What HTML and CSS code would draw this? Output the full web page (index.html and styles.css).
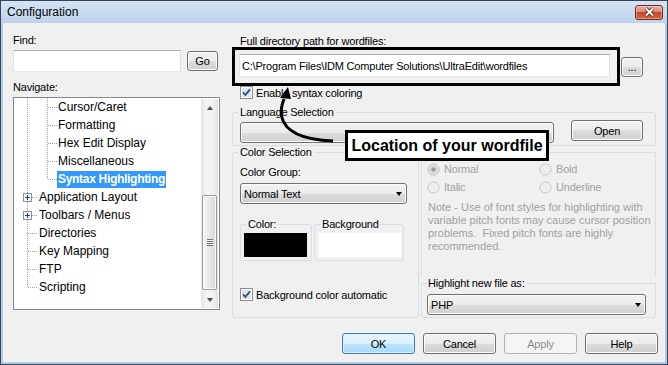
FILE: index.html
```html
<!DOCTYPE html>
<html lang="en">
<head>
<meta charset="utf-8">
<title>Configuration</title>
<link rel="stylesheet" href="styles.css">
</head>
<body>
<div class="window">
  <div class="titlebar">
    <span class="title">Configuration</span>
    <button class="close" aria-label="Close">
      <svg width="11" height="10" viewBox="0 0 11 10" aria-hidden="true">
        <path d="M2 1.5 L9 8.5 M9 1.5 L2 8.5" stroke="#4b1a10" stroke-width="3.6" fill="none"/>
        <path d="M2 1.5 L9 8.5 M9 1.5 L2 8.5" stroke="#fff" stroke-width="2" fill="none"/>
      </svg>
    </button>
  </div>

  <div class="client">
    <div class="left">
      <div class="lbl">Find:</div>
      <div class="find-row">
        <input class="text find" type="text" aria-label="Find">
        <button class="btn go">Go</button>
      </div>
      <div class="lbl nav-lbl">Navigate:</div>
      <div class="tree">
        <ul class="tree-items">
          <li class="node child"><span class="h"></span><span class="label">Cursor/Caret</span></li>
          <li class="node child"><span class="h"></span><span class="label">Formatting</span></li>
          <li class="node child"><span class="h"></span><span class="label">Hex Edit Display</span></li>
          <li class="node child"><span class="h"></span><span class="label">Miscellaneous</span></li>
          <li class="node child"><span class="h"></span><span class="label sel">Syntax Highlighting</span></li>
          <li class="node top"><svg class="exp" width="9" height="9" viewBox="0 0 9 9" aria-hidden="true"><rect x=".5" y=".5" width="8" height="8" fill="#f6f6f6" stroke="#919191"/><path d="M2 4.5h5M4.5 2v5" stroke="#1c4a8c"/></svg><span class="h"></span><span class="label">Application Layout</span></li>
          <li class="node top"><svg class="exp" width="9" height="9" viewBox="0 0 9 9" aria-hidden="true"><rect x=".5" y=".5" width="8" height="8" fill="#f6f6f6" stroke="#919191"/><path d="M2 4.5h5M4.5 2v5" stroke="#1c4a8c"/></svg><span class="h"></span><span class="label">Toolbars / Menus</span></li>
          <li class="node leaf"><span class="h"></span><span class="label">Directories</span></li>
          <li class="node leaf"><span class="h"></span><span class="label">Key Mapping</span></li>
          <li class="node leaf"><span class="h"></span><span class="label">FTP</span></li>
          <li class="node leaf"><span class="h"></span><span class="label">Scripting</span></li>
        </ul>
        <div class="scrollbar">
          <div class="sb-btn"><span class="tri-up"></span></div>
          <div class="sb-track">
            <div class="sb-thumb"><span class="grip"></span></div>
          </div>
          <div class="sb-btn"><span class="tri-down"></span></div>
        </div>
      </div>
    </div>

    <div class="right">
      <div class="lbl path-lbl">Full directory path for wordfiles:</div>
      <div class="path-row">
        <div class="frame">
          <input class="text path" type="text" value="C:\Program Files\IDM Computer Solutions\UltraEdit\wordfiles" aria-label="Full directory path for wordfiles">
        </div>
        <button class="btn browse">...</button>
      </div>
      <div class="check-row top-check">
        <svg width="13" height="13" viewBox="0 0 13 13" aria-hidden="true"><rect x=".5" y=".5" width="12" height="12" fill="#fff" stroke="#8e8f8f"/><rect x="2" y="2" width="9" height="9" fill="#dde3ea"/><path d="M3 6.3l2.4 2.6L10 3.4" fill="none" stroke="#34508a" stroke-width="1.8"/></svg>
        <span>Enable syntax coloring</span>
      </div>

      <fieldset class="group lang">
        <legend>Language Selection</legend>
        <div class="lang-row">
          <div class="combo lang-combo"></div>
          <button class="btn open">Open</button>
        </div>
      </fieldset>

      <div class="color-row">
        <fieldset class="group colorsel">
          <legend>Color Selection</legend>
          <div class="lbl cg-lbl">Color Group:</div>
          <div class="combo group-combo"><span>Normal Text</span><span class="caret"></span></div>
          <div class="swatches">
            <fieldset class="mini mcolor"><legend>Color:</legend><div class="swatch black"></div></fieldset>
            <fieldset class="mini mbg"><legend>Background</legend><div class="swatch white"></div></fieldset>
          </div>
          <div class="check-row bgauto">
            <svg width="13" height="13" viewBox="0 0 13 13" aria-hidden="true"><rect x=".5" y=".5" width="12" height="12" fill="#fff" stroke="#8e8f8f"/><rect x="2" y="2" width="9" height="9" fill="#dde3ea"/><path d="M3 6.3l2.4 2.6L10 3.4" fill="none" stroke="#34508a" stroke-width="1.8"/></svg>
            <span>Background color automatic</span>
          </div>
        </fieldset>

        <div class="style-col">
          <fieldset class="group fontstyle">
            <div class="radios">
              <div class="radio"><svg width="13" height="13" viewBox="0 0 13 13" aria-hidden="true"><circle cx="6.5" cy="6.5" r="5.5" fill="#f2f2f2" stroke="#b4b4b4"/><circle cx="6.5" cy="6.5" r="3.6" fill="#e6e6e6" stroke="#cdcdcd"/><circle cx="6.5" cy="6.5" r="2.3" fill="#9c9c9c"/></svg><span>Normal</span></div>
              <div class="radio"><svg width="13" height="13" viewBox="0 0 13 13" aria-hidden="true"><circle cx="6.5" cy="6.5" r="5.5" fill="#f4f4f4" stroke="#c2c2c2"/><circle cx="6.5" cy="6.5" r="3.8" fill="#ececec"/></svg><span>Bold</span></div>
              <div class="radio"><svg width="13" height="13" viewBox="0 0 13 13" aria-hidden="true"><circle cx="6.5" cy="6.5" r="5.5" fill="#f4f4f4" stroke="#c2c2c2"/><circle cx="6.5" cy="6.5" r="3.8" fill="#ececec"/></svg><span>Italic</span></div>
              <div class="radio"><svg width="13" height="13" viewBox="0 0 13 13" aria-hidden="true"><circle cx="6.5" cy="6.5" r="5.5" fill="#f4f4f4" stroke="#c2c2c2"/><circle cx="6.5" cy="6.5" r="3.8" fill="#ececec"/></svg><span>Underline</span></div>
            </div>
            <p class="note">Note - Use of font styles for highlighting with<br>variable pitch fonts may cause cursor position<br>problems.&nbsp; Fixed pitch fonts are highly<br>recommended.</p>
          </fieldset>
          <fieldset class="group hl">
            <legend>Highlight new file as:</legend>
            <div class="combo php"><span>PHP</span><span class="caret"></span></div>
          </fieldset>
        </div>
      </div>

      <div class="buttons">
        <button class="btn default">OK</button>
        <button class="btn">Cancel</button>
        <button class="btn" disabled>Apply</button>
        <button class="btn">Help</button>
      </div>
    </div>
  </div>

  <svg class="arrow" width="70" height="70" viewBox="270 80 70 70" aria-hidden="true">
    <path d="M333 141 C305 140 285 133 281.5 116 C280.5 109 282 104 284 99" fill="none" stroke="#000" stroke-width="3"/>
    <path d="M288 87 L280 98 L291 99 Z" fill="#000"/>
  </svg>
  <div class="callout">Location of your wordfile</div>
</div>
</body>
</html>
```

FILE: styles.css
```css
* { box-sizing: border-box; }
html, body { margin: 0; padding: 0; }
body {
  width: 668px;
  height: 365px;
  overflow: hidden;
  background: #fff;
  font-family: "Liberation Sans", Arial, sans-serif;
  font-size: 11px;
  letter-spacing: -0.2px;
  color: #000;
}

.window {
  position: relative;
  width: 668px;
  height: 365px;
  border: 1px solid #34465c;
  background: #b3cde8;
  display: flex;
  flex-direction: column;
}

.titlebar {
  height: 22px;
  flex: none;
  display: flex;
  align-items: center;
  justify-content: space-between;
  padding: 0 4px 0 6px;
  background: linear-gradient(#d6e3f2, #bcd3ec);
}
.title { font-size: 12px; letter-spacing: 0; }
.close {
  width: 28px;
  height: 15px;
  padding: 0;
  border: 1px solid #6d2a1f;
  border-radius: 3px;
  background: linear-gradient(#eab0a2 0%, #dd8a76 45%, #c7452b 50%, #d8663f 100%);
  box-shadow: inset 0 0 0 1px rgba(255,255,255,.35);
  display: flex;
  align-items: center;
  justify-content: center;
}

.client {
  flex: 1;
  margin: 0 2px 2px 2px;
  background: #f0f0f0;
  display: flex;
  gap: 12px;
  padding: 11px 0 0 10px;
}
.left { width: 207px; display: flex; flex-direction: column; }
.right { width: 426px; display: flex; flex-direction: column; padding-top: 1px; }

.lbl { line-height: 13px; }

.text {
  font: inherit;
  letter-spacing: inherit;
  color: #000;
  margin: 0;
  padding: 0 2px;
  background: #fff;
  border: 1px solid;
  border-color: #abadb3 #dbdfe6 #e3e9ef #e2e3ea;
  outline: none;
}

.btn, .combo {
  font: inherit;
  letter-spacing: inherit;
  color: #000;
  height: 21px;
  padding: 0;
  margin: 0;
  border: 1px solid #707070;
  border-radius: 3px;
  background: linear-gradient(#f2f2f2 0%, #ebebeb 50%, #dddddd 50%, #cfcfcf 100%);
  box-shadow: inset 0 0 0 1px #fbfbfb;
}
.btn.default {
  border-color: #3c7fb1;
  background: linear-gradient(#eaf6fd 0%, #d9f0fc 50%, #bee6fd 50%, #a7d9f5 100%);
  box-shadow: inset 0 0 0 1px #d8f0fb;
}
.btn:disabled {
  border-color: #adb2b5;
  background: #f4f4f4;
  box-shadow: none;
  color: #8a8a8a;
}

/* left column */
.find-row { display: flex; align-items: center; gap: 6px; margin-top: 3px; }
.find { width: 168px; height: 22px; }
.go { width: 31px; height: 20px; }
.nav-lbl { margin-top: 9px; }

.tree {
  margin-top: 3px;
  width: 207px;
  height: 213px;
  border: 1px solid #828790;
  background: #fff;
  display: flex;
}
.tree-items {
  flex: 1;
  list-style: none;
  margin: 0;
  padding: 0;
  font-size: 12px;
  letter-spacing: 0;
  background:
    repeating-linear-gradient(to bottom, #a0a0a0 0 1px, transparent 1px 2px) 13px 0 / 1px 190px no-repeat,
    repeating-linear-gradient(to bottom, #a0a0a0 0 1px, transparent 1px 2px) 33px 0 / 1px 82px no-repeat;
}
.node { height: 18px; display: flex; align-items: center; }
.node.child { padding-left: 34px; }
.node.top { padding-left: 9px; }
.node.leaf { padding-left: 14px; }
.h {
  flex: none;
  width: 9px;
  height: 1px;
  align-self: flex-start;
  margin-top: 9px;
  background: repeating-linear-gradient(to right, #a0a0a0 0 1px, transparent 1px 2px);
}
.node.top .h { width: 6px; }
.node.leaf .h { width: 10px; }
.exp { flex: none; display: block; align-self: flex-start; margin-top: 5px; }
.label { padding: 0 1px; line-height: 17px; white-space: nowrap; }
.label.sel { background: #3399ff; color: #fff; font-weight: bold; letter-spacing: -0.3px; }

.scrollbar {
  width: 17px;
  flex: none;
  margin: 1px 1px 1px 0;
  display: flex;
  flex-direction: column;
  background: linear-gradient(to right, #e4e4e4, #f5f5f5 35%, #f1f1f1 70%, #e2e2e2);
}
.sb-btn { height: 17px; flex: none; display: flex; align-items: center; justify-content: center; }
.tri-up { width: 0; height: 0; border-left: 3.5px solid transparent; border-right: 3.5px solid transparent; border-bottom: 4px solid #4a4a4a; }
.tri-down { width: 0; height: 0; border-left: 3.5px solid transparent; border-right: 3.5px solid transparent; border-top: 4px solid #4a4a4a; }
.sb-track { flex: 1; padding-top: 79px; }
.sb-thumb {
  height: 95px;
  margin: 0 1px;
  border: 1px solid #9b9b9b;
  border-radius: 2px;
  background: linear-gradient(to right, #f4f4f4, #e7e7e7 50%, #d6d6d6);
  box-shadow: inset 0 0 0 1px #fafafa;
  display: flex;
  align-items: center;
  justify-content: center;
}
.grip { width: 6px; height: 7px; background: repeating-linear-gradient(to bottom, #6e6e6e 0 1px, #fafafa 1px 2px); }

/* right column */
.path-lbl { padding-left: 8px; line-height: 12px; }
.path-row { display: flex; align-items: center; }
.frame { border: 3px solid #000; padding: 4px 7px 6px 4px; }
.path { width: 371px; height: 23px; }
.browse { width: 22px; height: 20px; margin-left: 1px; }
.check-row { display: flex; align-items: center; gap: 3px; height: 13px; }
.check-row svg { flex: none; display: block; }
.top-check { padding-left: 8px; }

.group {
  margin: 0;
  min-width: 0;
  border: 1px solid #d5dfe5;
  border-radius: 3px;
}
.group > legend { padding: 0 2px; margin-left: -2px; line-height: 13px; }

.lang { margin: 7px 2px 0 0; padding: 1px 12px 2px 7px; }
.lang-row { display: flex; align-items: flex-start; }
.lang-combo { width: 314px; margin-top: 2px; }
.open { width: 72px; margin-left: 17px; }

.color-row { display: flex; }
.colorsel { width: 187px; padding: 0 7px 16px 7px; }
.cg-lbl { margin-top: 7px; }
.combo { display: flex; align-items: center; justify-content: space-between; padding: 0 4px 0 3px; }
.group-combo { width: 167px; margin-top: 4px; }
.caret { width: 0; height: 0; border-left: 3.5px solid transparent; border-right: 3.5px solid transparent; border-top: 4px solid #000; }

.swatches { display: flex; gap: 2px; margin-top: 14px; }
.mini { margin: 0; min-width: 0; border: 1px solid #d5dfe5; border-radius: 3px; }
.mini > legend { padding: 0 1px; line-height: 13px; }
.mcolor { width: 72px; padding: 2px 4px 3px 3px; }
.mcolor > legend { margin-left: 3px; }
.mbg { width: 90px; padding: 2px 2px 3px 4px; }
.mbg > legend { margin-left: 2px; }
.swatch { height: 24px; }
.swatch.black { width: 63px; background: #000; }
.swatch.white { width: 82px; background: #fff; }
.bgauto { margin-top: 27px; }

.style-col { width: 235px; margin-left: 2px; display: flex; flex-direction: column; }
.fontstyle {
  flex: 1;
  margin: 6px 0 0 0;
  padding: 7px 5px 0 5px;
  border-bottom: none;
  border-radius: 3px 3px 0 0;
}
.radios { display: grid; grid-template-columns: 112px auto; grid-auto-rows: 18px; }
.radio { display: flex; align-items: center; gap: 4px; color: #a0a0a0; }
.radio svg { display: block; flex: none; }
.note { margin: 5px 0 0 1px; line-height: 13px; color: #a0a0a0; letter-spacing: 0; white-space: nowrap; }
.hl { margin: 0; padding: 4px 9px 2px 5px; border-radius: 0 0 3px 3px; }
.hl > legend { margin-left: 0; padding: 0 1px; }
.php { width: 219px; }

.buttons { display: flex; justify-content: flex-end; gap: 8px; margin-top: 15px; }
.buttons .btn { width: 73px; }

/* annotation overlay */
.arrow { position: absolute; left: 269px; top: 79px; }
.callout {
  position: absolute;
  left: 344px;
  top: 129px;
  width: 204px;
  height: 31px;
  border: 3px solid #000;
  background: #fff;
  font-weight: bold;
  font-size: 16px;
  letter-spacing: 0;
  line-height: 25px;
  text-align: center;
  white-space: nowrap;
}
```
